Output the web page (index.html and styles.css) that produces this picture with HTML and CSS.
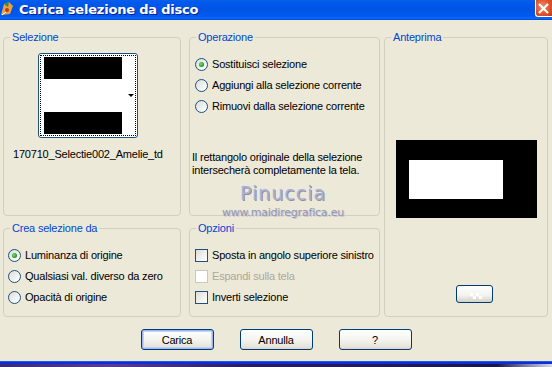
FILE: index.html
```html
<!DOCTYPE html>
<html lang="it">
<head>
    <meta charset="UTF-8">
    <title>Carica selezione da disco</title>
    <link rel="stylesheet" href="styles.css">
</head>
<body>
    <div class="window">
        <div class="titlebar">
            <svg class="app-icon" width="14" height="16" viewBox="0 0 14 16">
                <path d="M1 14 L4 3 L9 1 L13 5 L10 13 Z" fill="#e8a040"/>
                <path d="M4 3 L9 1 L8 6 Z" fill="#3c8a2c"/>
                <circle cx="7" cy="9" r="2" fill="#c23a1c"/>
                <path d="M2 14 L6 11" stroke="#ffffff" stroke-width="1"/>
            </svg>
            <span class="title">Carica selezione da disco</span>
            <span class="close">
                <svg width="13" height="13" viewBox="0 0 13 13">
                    <path d="M2 2 L11 11 M11 2 L2 11" stroke="#ffffff" stroke-width="2.2"/>
                </svg>
            </span>
        </div>

        <div class="content">
            <div class="groups">
                <fieldset class="group sel">
                    <legend>Selezione</legend>
                    <div class="thumb">
                        <div class="thumb-focus">
                            <div class="thumb-img">
                                <div class="band"></div>
                                <div class="band white"></div>
                                <div class="band"></div>
                            </div>
                            <span class="thumb-arrow"></span>
                        </div>
                    </div>
                    <div class="file-name">170710_Selectie002_Amelie_td</div>
                </fieldset>

                <fieldset class="group op">
                    <legend>Operazione</legend>
                    <div class="options">
                        <label class="row"><input type="radio" name="op" checked> Sostituisci selezione</label>
                        <label class="row"><input type="radio" name="op"> Aggiungi alla selezione corrente</label>
                        <label class="row"><input type="radio" name="op"> Rimuovi dalla selezione corrente</label>
                    </div>
                    <p class="info">Il rettangolo originale della selezione<br>intersecherà completamente la tela.</p>
                </fieldset>

                <fieldset class="group preview">
                    <legend>Anteprima</legend>
                    <div class="preview-img">
                        <div class="preview-sel"></div>
                    </div>
                    <button class="small-btn" type="button">
                        <svg width="14" height="8" viewBox="0 0 14 8">
                            <rect x="2" y="0" width="3" height="3" fill="#ffffff"/>
                            <rect x="8" y="0" width="3" height="3" fill="#ffffff"/>
                            <rect x="5" y="3" width="3" height="3" fill="#ffffff"/>
                            <rect x="0" y="4" width="2" height="3" fill="#dedede"/>
                            <rect x="11" y="3" width="3" height="3" fill="#ffffff"/>
                            <rect x="8" y="5" width="3" height="3" fill="#dcdcdc"/>
                            <rect x="2" y="5" width="3" height="3" fill="#dcdcdc"/>
                        </svg>
                    </button>
                </fieldset>

                <fieldset class="group crea">
                    <legend>Crea selezione da</legend>
                    <div class="options narrow">
                        <label class="row"><input type="radio" name="src" checked> Luminanza di origine</label>
                        <label class="row"><input type="radio" name="src"> Qualsiasi val. diverso da zero</label>
                        <label class="row"><input type="radio" name="src"> Opacità di origine</label>
                    </div>
                </fieldset>

                <fieldset class="group opz">
                    <legend>Opzioni</legend>
                    <div class="options">
                        <label class="row"><input type="checkbox"> Sposta in angolo superiore sinistro</label>
                        <label class="row disabled"><input type="checkbox" disabled> Espandi sulla tela</label>
                        <label class="row"><input type="checkbox"> Inverti selezione</label>
                    </div>
                </fieldset>
            </div>

            <div class="buttons">
                <button class="btn default" type="button">Carica</button>
                <button class="btn" type="button">Annulla</button>
                <button class="btn" type="button">?</button>
            </div>

            <div class="watermark">
                <span class="wm-name">Pinuccia</span>
                <span class="wm-url">www.maidiregrafica.eu</span>
            </div>
        </div>

        <div class="frame-bottom"></div>
        <div class="desktop"></div>
    </div>
</body>
</html>
```

FILE: styles.css
```css
:root {
    --face: #ece9d8;
    --group-border: #d0d0bf;
    --legend: #0046d5;
    --control-border: #1c5180;
    --btn-border: #003c74;
    --disabled: #aca899;
}

* {
    box-sizing: border-box;
    margin: 0;
    padding: 0;
}

body {
    font-family: 'Liberation Sans', Arial, sans-serif;
    font-size: 11px;
    line-height: 13px;
    letter-spacing: -0.2px;
    color: #000000;
    background: var(--face);
    width: 552px;
    height: 367px;
    overflow: hidden;
}

.window {
    display: flex;
    flex-direction: column;
    height: 367px;
}

/* title bar */
.titlebar {
    height: 20px;
    display: flex;
    align-items: center;
    background: linear-gradient(#0a5fe8 0%, #0058ee 15%, #0054e3 50%, #005af0 80%, #0a66f6 92%, #0046d0 100%);
}

.app-icon {
    margin-top: -2px;
}

.title {
    margin-left: 5px;
    margin-top: -2px;
    flex: 1;
    color: #ffffff;
    font-family: 'DejaVu Sans', sans-serif;
    font-weight: bold;
    font-size: 13px;
    letter-spacing: -0.2px;
    text-shadow: 1px 1px 0 #0a1e8c;
}

.close {
    align-self: flex-start;
    width: 17px;
    height: 17px;
    display: flex;
    align-items: center;
    justify-content: center;
    padding-right: 1px;
    background: radial-gradient(circle at 40% 40%, #f08a6a, #e0542d 55%, #c03a15);
    border: 1px solid #ffffff;
    border-right: none;
    border-top: none;
    border-radius: 0 0 0 3px;
}

/* content */
.content {
    position: relative;
    padding: 11px 0 11px 3px;
}

.groups {
    display: grid;
    grid-template-columns: 178px 8px 191px 4px 164px;
    grid-template-rows: 185px 95px;
    row-gap: 6px;
    grid-template-areas:
        "sel . op . prev"
        "crea . opz . prev";
}

.group {
    border: 1px solid var(--group-border);
    border-radius: 4px;
    padding: 0;
    margin: 0;
    min-width: 0;
}

.group legend {
    margin-left: 6px;
    padding: 0 2px;
    color: var(--legend);
}

.sel { grid-area: sel; }
.op { grid-area: op; }
.preview { grid-area: prev; }
.crea { grid-area: crea; }
.opz { grid-area: opz; }

/* selection thumbnail */
.thumb {
    margin: 9px 0 0 34px;
    width: 100px;
    height: 85px;
    border: 1px solid var(--control-border);
    border-radius: 3px;
    background: #ffffff;
    padding: 1px;
}

.thumb-focus {
    position: relative;
    height: 100%;
    border: 1px dotted #000000;
    padding: 1px 0 0 3px;
}

.thumb-img {
    width: 78px;
    height: 77px;
    display: flex;
    flex-direction: column;
}

.band {
    height: 22px;
    background: #000000;
}

.band.white {
    height: 33px;
    background: #ffffff;
}

.thumb-arrow {
    position: absolute;
    right: 1px;
    top: 38px;
    border-left: 3px solid transparent;
    border-right: 3px solid transparent;
    border-top: 3px solid #000000;
}

.file-name {
    margin: 10px 0 0 9px;
}

/* radio / checkbox rows */
.options {
    margin-top: 10px;
    padding-left: 5px;
    display: flex;
    flex-direction: column;
}

.options.narrow {
    padding-left: 4px;
}

.row {
    height: 21px;
    display: flex;
    align-items: center;
    gap: 4px;
    white-space: nowrap;
}

.row.disabled {
    color: var(--disabled);
}

input[type="radio"],
input[type="checkbox"] {
    appearance: none;
    margin: 0;
    width: 13px;
    height: 13px;
    flex: none;
    border: 1px solid var(--control-border);
    background: linear-gradient(135deg, #dcdcd7, #f6f6f4 70%, #ffffff);
}

input[type="radio"] {
    border-radius: 50%;
    display: grid;
    place-items: center;
}

input[type="radio"]:checked::after {
    content: "";
    width: 5px;
    height: 5px;
    border-radius: 50%;
    background: radial-gradient(circle at 40% 40%, #7be07b, #21a121 60%, #1a7a1a);
}

input[type="checkbox"]:disabled {
    border-color: #cac8bb;
    background: #ffffff;
}

.info {
    margin: 34px 0 0 2px;
}

/* preview */
.preview-img {
    margin: 96px 0 0 11px;
    width: 141px;
    height: 78px;
    background: #000000;
    padding: 20px 0 0 13px;
}

.preview-sel {
    width: 94px;
    height: 39px;
    background: #ffffff;
}

.small-btn {
    margin: 67px 0 0 71px;
    width: 37px;
    height: 18px;
    display: flex;
    align-items: flex-end;
    justify-content: center;
    padding-bottom: 1px;
    border: 1px solid var(--btn-border);
    border-radius: 3px;
    background: linear-gradient(#ffffff, #f2f2ee 60%, #d6d0c5);
}

/* dialog buttons */
.buttons {
    margin-top: 12px;
    padding-right: 3px;
    display: flex;
    justify-content: center;
    gap: 26px;
}

.btn {
    width: 73px;
    height: 21px;
    font-family: 'Liberation Sans', Arial, sans-serif;
    font-size: 11px;
    letter-spacing: -0.2px;
    color: #000000;
    border: 1px solid var(--btn-border);
    border-radius: 3px;
    background: linear-gradient(#ffffff, #f4f4f0 50%, #e6e3d8 90%, #d6d0c5);
}

.btn.default {
    box-shadow: inset 0 0 0 1px #9cb8f0, inset 0 0 0 2px #c0d2f6;
}

/* watermark over the dialog */
.watermark {
    position: absolute;
    left: 220px;
    top: 162px;
    width: 126px;
    display: flex;
    flex-direction: column;
    align-items: center;
    pointer-events: none;
}

.wm-name {
    font-family: 'DejaVu Sans', sans-serif;
    font-size: 19px;
    line-height: 22px;
    letter-spacing: 1px;
    color: #b0b0c6;
    text-shadow: 1px 1px 0 #8e8ea6, -1px -1px 0 #e6e6ee;
}

.wm-url {
    margin-top: 3px;
    font-family: 'DejaVu Sans', sans-serif;
    font-size: 11px;
    line-height: 12px;
    letter-spacing: -0.2px;
    color: #9494ae;
    text-shadow: 1px 1px 0 #c8c8d6;
}

/* window edge and desktop below */
.frame-bottom {
    height: 3px;
    background: #0831d9;
    border-top: 1px solid #2a56e6;
}

.desktop {
    flex: 1;
    background: linear-gradient(90deg, #3a2a78 0%, #5a3c98 20%, #2a1c60 45%, #241a58 70%, #1c1648 90%, #d8d8f0 100%);
}
```
